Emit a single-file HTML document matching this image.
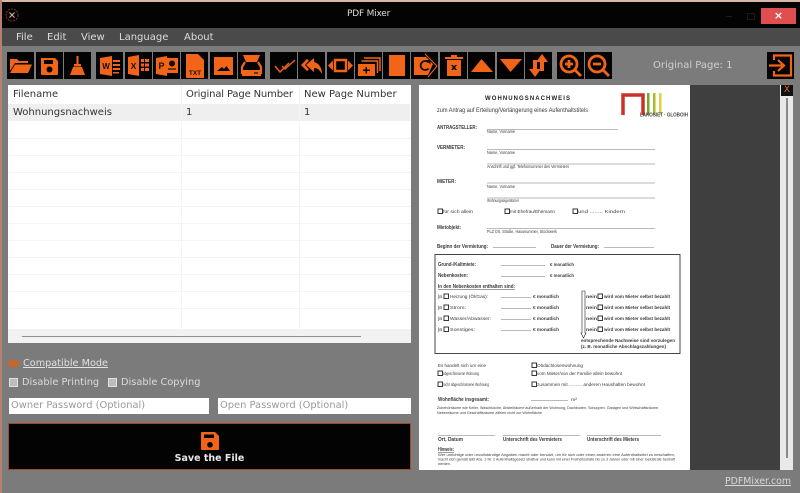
<!DOCTYPE html>
<html><head><meta charset="utf-8"><style>
html,body{margin:0;padding:0}
body{width:800px;height:493px;overflow:hidden;position:relative;background:#7b7b7b;font-family:"DejaVu Sans",sans-serif;filter:blur(.35px)}
.a{position:absolute;white-space:nowrap}
.b{position:absolute;top:52px;width:27px;height:27px;background:#030303}
.b svg{display:block;width:27px;height:27px}
.t{font-size:10px;color:#333}
.l{position:absolute;background:#f4f4f4}
.m{top:32px;font-size:10px;color:#ddd}
</style></head><body>
<div class="a" style="left:0;top:0;width:800px;height:2px;background:#d8b6a6"></div>
<div class="a" style="left:0;top:0;width:2px;height:493px;background:#b5806c"></div>
<div class="a" style="left:2px;top:2px;width:798px;height:26px;background:#030303"></div>
<svg class="a" style="left:5px;top:7px" width="16" height="16" viewBox="0 0 16 16"><circle cx="7" cy="8" r="6" fill="none" stroke="#7a3a20" stroke-width="1" stroke-dasharray="2 1"/><path d="M4.500 5.500L7 8L4.500 10.500M9.500 5.500L7 8L9.500 10.500" fill="none" stroke="#d9a58f" stroke-width="1.200"/></svg>
<div class="a" style="left:347px;top:9px;font-size:9px;letter-spacing:-.2px;color:#ddd">PDF Mixer</div>
<div class="a" style="left:726px;top:16px;width:6px;height:1px;background:#1a1a1a"></div>
<div class="a" style="left:747px;top:13px;width:6px;height:5px;border:1px solid #1a1a1a"></div>
<div class="a" style="left:761px;top:8px;width:35px;height:16px;background:#e04f4f;color:#fff;font-size:11px;line-height:16px;text-align:center;font-weight:bold">×</div>
<div class="a" style="left:2px;top:28px;width:798px;height:18px;background:#4a4a4a"></div>
<div class="a m" style="left:16px">File</div>
<div class="a m" style="left:47px">Edit</div>
<div class="a m" style="left:81px">View</div>
<div class="a m" style="left:119px">Language</div>
<div class="a m" style="left:184px">About</div>

<div class="b" style="left:7px"><svg viewBox="0 0 27 27" fill="#f26418"><path d="M3 19V7h7l2 2h9v2H8z"/><path d="M8 12.500h17L21 21H3z"/></svg></div>
<div class="b" style="left:36px"><svg viewBox="0 0 27 27" fill="#f26418"><path fill-rule="evenodd" d="M5 6h14l3 3v13a1 1 0 0 1-1 1H6a1 1 0 0 1-1-1zM8 8v4h9V8zM13.500 14.500a3 3 0 1 0 .01 0z"/></svg></div>
<div class="b" style="left:64px"><svg viewBox="0 0 27 27" fill="#f26418"><path d="M12.500 4h2v8h-2zM10 12h7v2.500h-7zM9 15h9l3 8H6z"/></svg></div>
<div class="b" style="left:96px"><svg viewBox="0 0 27 27" fill="#f26418"><path d="M17 8h7v2h-7zM17 12h7v2h-7zM17 16h7v2h-7zM17 20h6v1.500h-6z"/><path d="M4 6l12-2v20L4 22z"/><text x="10" y="17" font-size="8" font-weight="bold" fill="#111" text-anchor="middle" font-family="Liberation Sans">W</text></svg></div>
<div class="b" style="left:125px"><svg viewBox="0 0 27 27" fill="#f26418"><path d="M16 7h3v3h-3zM20 7h4v3h-4zM16 11.500h3v3h-3zM20 11.500h4v3h-4zM16 16h3v3h-3zM20 16h4v3h-4z"/><path d="M3 5l11-2v21L3 22z"/><text x="8.500" y="17" font-size="8.500" font-weight="bold" fill="#111" text-anchor="middle" font-family="Liberation Sans">X</text></svg></div>
<div class="b" style="left:153px"><svg viewBox="0 0 27 27" fill="#f26418"><path d="M12 6h13v15H12z"/><circle cx="19" cy="11.500" r="3" fill="#111"/><path d="M15 17h8" stroke="#111" stroke-width="1.200"/><path d="M3 6l11-2v20L3 22z"/><text x="8.500" y="17" font-size="9" font-weight="bold" fill="#111" text-anchor="middle" font-family="Liberation Sans">P</text></svg></div>
<div class="b" style="left:181px"><svg viewBox="0 0 27 27" fill="#f26418"><path d="M5 2h12l6 6v18H5z"/><text x="14" y="23" font-size="6.500" font-weight="bold" fill="#111" text-anchor="middle" font-family="Liberation Sans">TXT</text></svg></div>
<div class="b" style="left:210px"><svg viewBox="0 0 27 27" fill="#f26418"><path fill-rule="evenodd" d="M4 5h19v18H4zM7 19h13l-3.500-5-2.500 3-2-2z"/></svg></div>
<div class="b" style="left:238px"><svg viewBox="0 0 27 27" fill="none" stroke="#f26418" stroke-width="2.200"><path d="M5 3h17l-3 7H8z" fill="#f26418" stroke="none"/><path d="M7 10l-3 5v7M20 10l3 5v7"/><path d="M4 18h19v6H4z" fill="#f26418" stroke="none"/><path d="M16 21h4" stroke="#111" stroke-width="1.200"/></svg></div>

<div class="b" style="left:270px"><svg viewBox="0 0 27 27" fill="none" stroke="#e85f1c" stroke-width="1.500"><path d="M5 14l5 6 9-9M12 14l3 3 10-9"/></svg></div>
<div class="b" style="left:298px"><svg viewBox="0 0 27 27" fill="#f26418"><path d="M9 7L3 13l6 6 2-1.500-4-4.500 4-4.500z"/><path d="M16 6l-8 7 8 7v-4c3 0 5 1 8 6 0-6-3-11-8-12z"/></svg></div>
<div class="b" style="left:327px"><svg viewBox="0 0 27 27" fill="#f26418"><path d="M1 13.500l5-5v10zM26 13.500l-5-5v10z"/><path d="M8 8h11v11H8z" fill="none" stroke="#f26418" stroke-width="2.400"/></svg></div>
<div class="b" style="left:355px"><svg viewBox="0 0 27 27" fill="#f26418"><path d="M9 6h16v13" fill="none" stroke="#f26418" stroke-width="1.500"/><path d="M6.500 9h16v12" fill="none" stroke="#f26418" stroke-width="1.500"/><path fill-rule="evenodd" d="M3 12h17v12H3zM10.500 15v2.500H8v1.500h2.500v2.500H12V19h3v-1.500h-3V15z"/></svg></div>
<div class="b" style="left:383px"><svg viewBox="0 0 27 27" fill="#f26418"><path d="M6 3h16v21H6z"/></svg></div>
<div class="b" style="left:411px"><svg viewBox="0 0 27 27" fill="#f26418"><path d="M14 2l12 12-9 11" fill="none" stroke="#f26418" stroke-width="1"/><path d="M3 5h12l7 7-5 11H3z"/><path d="M17.500 10.500a4.500 4.500 0 1 0 0 6" fill="none" stroke="#111" stroke-width="1.800"/><path d="M15 8h4.500v4.500z" fill="#111"/></svg></div>
<div class="b" style="left:440px"><svg viewBox="0 0 27 27" fill="#f26418"><path d="M5 5h6V3h6v2h6v2H5z"/><path fill-rule="evenodd" d="M7 8h14v16H7zM11 13l2 2.500-2 2.500h2l1-1.500 1 1.500h2l-2-2.500 2-2.500h-2l-1 1.500-1-1.500z"/></svg></div>
<div class="b" style="left:468px"><svg viewBox="0 0 27 27" fill="#f26418"><path d="M13.500 7L25 20H3z"/></svg></div>
<div class="b" style="left:497px"><svg viewBox="0 0 27 27" fill="#f26418"><path d="M13.500 20L25 7H3z"/></svg></div>
<div class="b" style="left:525px"><svg viewBox="0 0 27 27" fill="#f26418"><path d="M17 2l6 8h-4v9h-4v-9h-4z"/><path d="M10 25l-6-8h4V8h4v9h4z"/></svg></div>
<div class="b" style="left:557px"><svg viewBox="0 0 27 27" fill="none" stroke="#f26418" stroke-width="2.800"><circle cx="12" cy="12" r="8"/><path d="M18 18l6 6M8 12h8M12 8v8"/></svg></div>
<div class="b" style="left:585px"><svg viewBox="0 0 27 27" fill="none" stroke="#f26418" stroke-width="2.800"><circle cx="12" cy="12" r="8"/><path d="M18 18l6 6M8 12h8"/></svg></div>
<div class="a" style="left:653px;top:60px;font-size:10px;color:#cfcfcf">Original Page: 1</div>
<div class="b" style="left:767px"><svg viewBox="0 0 27 27" fill="none" stroke="#f26418" stroke-width="2.200"><path d="M7 8V3.500h17v20H7V19"/><path d="M2 13.500h13M11 8l6 5.500-6 5.500"/></svg></div>

<div class="a" style="left:8px;top:85px;width:403px;height:258px;background:#fff"></div>
<div class="a" style="left:8px;top:104px;width:402px;height:17px;background:#efefef"></div>
<div class="a" style="left:8px;top:329px;width:403px;height:14px;background:#f2f2f2"></div>
<div class="l" style="left:181px;top:85px;width:1px;height:244px"></div>
<div class="l" style="left:299px;top:85px;width:1px;height:244px"></div>
<div class="l" style="left:8px;top:138px;width:403px;height:1px"></div>
<div class="l" style="left:8px;top:155px;width:403px;height:1px"></div>
<div class="l" style="left:8px;top:172px;width:403px;height:1px"></div>
<div class="l" style="left:8px;top:189px;width:403px;height:1px"></div>
<div class="l" style="left:8px;top:206px;width:403px;height:1px"></div>
<div class="l" style="left:8px;top:223px;width:403px;height:1px"></div>
<div class="l" style="left:8px;top:240px;width:403px;height:1px"></div>
<div class="l" style="left:8px;top:257px;width:403px;height:1px"></div>
<div class="l" style="left:8px;top:274px;width:403px;height:1px"></div>
<div class="l" style="left:8px;top:291px;width:403px;height:1px"></div>
<div class="l" style="left:8px;top:308px;width:403px;height:1px"></div>
<div class="a" style="left:22px;top:336px;width:339px;height:1px;background:#8f8f8f"></div>
<div class="a t" style="left:13px;top:89px">Filename</div>
<div class="a t" style="left:186px;top:89px;letter-spacing:-.15px">Original Page Number</div>
<div class="a t" style="left:304px;top:89px">New Page Number</div>
<div class="a t" style="left:13px;top:107px">Wohnungsnachweis</div>
<div class="a t" style="left:186px;top:107px">1</div>
<div class="a t" style="left:304px;top:107px">1</div>

<div class="a" style="left:8px;top:360px;width:11px;height:7px;background:#c9652f;border-radius:3px"></div>
<div class="a" style="left:23px;top:358px;font-size:9.700px;color:#e2e2e2;text-decoration:underline">Compatible Mode</div>
<div class="a" style="left:9px;top:378px;width:7px;height:7px;background:#bcbcbc;border:1px solid #e0e0e0"></div>
<div class="a" style="left:22px;top:377px;font-size:9.800px;color:#dcdcdc">Disable Printing</div>
<div class="a" style="left:108px;top:378px;width:7px;height:7px;background:#bcbcbc;border:1px solid #e0e0e0"></div>
<div class="a" style="left:121px;top:377px;font-size:9.800px;color:#dcdcdc">Disable Copying</div>
<div class="a" style="left:9px;top:398px;width:200px;height:16px;background:#fff;color:#9a9a9a;font-size:9.900px;line-height:15px;text-indent:2px">Owner Password (Optional)</div>
<div class="a" style="left:218px;top:398px;width:193px;height:16px;background:#fff;color:#9a9a9a;font-size:9.900px;line-height:15px;text-indent:2px">Open Password (Optional)</div>
<div class="a" style="left:8px;top:423px;width:403px;height:47px;background:#030303;box-sizing:border-box;border:1px solid #a04a28"></div>
<svg class="a" style="left:199px;top:431px" width="22" height="20" viewBox="0 0 22 20"><path fill="#f26418" fill-rule="evenodd" d="M2 2a1 1 0 0 1 1-1h13l4 4v13a1 1 0 0 1-1 1H3a1 1 0 0 1-1-1zM5 3.500v3.500h10V3.500zM11 11a2.800 2.800 0 1 0 .01 0z"/></svg>
<div class="a" style="left:8px;top:453px;width:403px;text-align:center;font-size:9.500px;font-weight:bold;color:#e8e8e8">Save the File</div>

<div class="a" style="left:690px;top:85px;width:90px;height:385px;background:#3f3f3f"></div>
<div class="a" style="left:780px;top:85px;width:13px;height:385px;background:#e9e9e9"></div>
<div class="a" style="left:781px;top:85px;width:12px;height:11px;background:#111;color:#e06a30;font-size:9px;line-height:11px;text-align:center">X</div>
<div class="a" style="left:786px;top:98px;width:2px;height:360px;background:#8a8a8a"></div>
<div class="a" style="left:725px;top:476px;font-size:9.400px;color:#d8d8d8;text-decoration:underline">PDFMixer.com</div>

<svg class="a" style="left:419px;top:85px;background:#fff;filter:blur(.3px)" width="271" height="385" viewBox="419 85 271 385" font-family="Liberation Sans,sans-serif" fill="#3a3a3a">
<g font-size="5" font-weight="bold">
<text x="485" y="100" textLength="86" font-size="6" letter-spacing="1" fill="#222">WOHNUNGSNACHWEIS</text>
<text x="437" y="129" textLength="40" lengthAdjust="spacingAndGlyphs">ANTRAGSTELLER:</text>
<text x="437" y="149" textLength="28" lengthAdjust="spacingAndGlyphs">VERMIETER:</text>
<text x="437" y="183" textLength="19" lengthAdjust="spacingAndGlyphs">MIETER:</text>
<text x="437" y="229" textLength="24" lengthAdjust="spacingAndGlyphs">Mietobjekt:</text>
<text x="437" y="248" textLength="51" lengthAdjust="spacingAndGlyphs">Beginn der Vermietung:</text>
<text x="551" y="248" textLength="48" lengthAdjust="spacingAndGlyphs">Dauer der Vermietung:</text>
<text x="438" y="266" textLength="38" lengthAdjust="spacingAndGlyphs">Grund-/Kaltmiete:</text>
<text x="438" y="277" textLength="30" lengthAdjust="spacingAndGlyphs">Nebenkosten:</text>
<text x="438" y="288" textLength="77" lengthAdjust="spacingAndGlyphs" text-decoration="underline">In den Nebenkosten enthalten sind:</text>
<text x="438" y="401" textLength="51" lengthAdjust="spacingAndGlyphs">Wohnfläche insgesamt:</text>
<text x="438" y="441" textLength="25" lengthAdjust="spacingAndGlyphs">Ort, Datum</text>
<text x="503" y="441" textLength="59" lengthAdjust="spacingAndGlyphs">Unterschrift des Vermieters</text>
<text x="587" y="441" textLength="52" lengthAdjust="spacingAndGlyphs">Unterschrift des Mieters</text>
<text x="438" y="451" textLength="16" lengthAdjust="spacingAndGlyphs" text-decoration="underline">Hinweis:</text>
</g>
<g font-size="4.500">
<text x="437" y="112" textLength="151" lengthAdjust="spacingAndGlyphs" font-size="6">zum Antrag auf Erteilung/Verlängerung eines Aufenthaltstitels</text>
<text x="487" y="133" textLength="28" lengthAdjust="spacingAndGlyphs">Name, Vorname</text>
<text x="487" y="154" textLength="28" lengthAdjust="spacingAndGlyphs">Name, Vorname</text>
<text x="487" y="168" textLength="82" lengthAdjust="spacingAndGlyphs">Anschrift und ggf. Telefonnummer des Vermieters</text>
<text x="487" y="188" textLength="28" lengthAdjust="spacingAndGlyphs">Name, Vorname</text>
<text x="487" y="202" textLength="32" lengthAdjust="spacingAndGlyphs">Wohnungseigentümer</text>
<text x="443" y="213" textLength="30" lengthAdjust="spacingAndGlyphs">für sich allein</text>
<text x="510" y="213" textLength="45" lengthAdjust="spacingAndGlyphs">mit Ehefrau/Ehemann</text>
<text x="578" y="213" textLength="47" lengthAdjust="spacingAndGlyphs">und ........ Kindern</text>
<text x="487" y="233" textLength="70" lengthAdjust="spacingAndGlyphs">PLZ Ort, Straße, Hausnummer, Stockwerk</text>
<text x="550" y="266" textLength="24" lengthAdjust="spacingAndGlyphs" font-weight="bold">€ monatlich</text>
<text x="550" y="277" textLength="24" lengthAdjust="spacingAndGlyphs" font-weight="bold">€ monatlich</text>
<text x="438" y="298" font-size="5">ja</text><text x="450" y="298" textLength="38" lengthAdjust="spacingAndGlyphs">Heizung (Öl/Gas):</text>
<text x="438" y="309" font-size="5">ja</text><text x="450" y="309" textLength="16" lengthAdjust="spacingAndGlyphs">Strom:</text>
<text x="438" y="320" font-size="5">ja</text><text x="450" y="320" textLength="41" lengthAdjust="spacingAndGlyphs">Wasser/Abwasser:</text>
<text x="438" y="331" font-size="5">ja</text><text x="450" y="331" textLength="25" lengthAdjust="spacingAndGlyphs">Sonstiges:</text>
<text x="533" y="298" textLength="26" lengthAdjust="spacingAndGlyphs" font-weight="bold">€ monatlich</text>
<text x="533" y="309" textLength="26" lengthAdjust="spacingAndGlyphs" font-weight="bold">€ monatlich</text>
<text x="533" y="320" textLength="26" lengthAdjust="spacingAndGlyphs" font-weight="bold">€ monatlich</text>
<text x="533" y="331" textLength="26" lengthAdjust="spacingAndGlyphs" font-weight="bold">€ monatlich</text>
<text x="586" y="298" textLength="11" lengthAdjust="spacingAndGlyphs" font-weight="bold">nein</text><text x="604" y="298" textLength="66" lengthAdjust="spacingAndGlyphs" font-weight="bold">wird vom Mieter selbst bezahlt</text>
<text x="586" y="309" textLength="11" lengthAdjust="spacingAndGlyphs" font-weight="bold">nein</text><text x="604" y="309" textLength="66" lengthAdjust="spacingAndGlyphs" font-weight="bold">wird vom Mieter selbst bezahlt</text>
<text x="586" y="320" textLength="11" lengthAdjust="spacingAndGlyphs" font-weight="bold">nein</text><text x="604" y="320" textLength="66" lengthAdjust="spacingAndGlyphs" font-weight="bold">wird vom Mieter selbst bezahlt</text>
<text x="586" y="331" textLength="11" lengthAdjust="spacingAndGlyphs" font-weight="bold">nein</text><text x="604" y="331" textLength="66" lengthAdjust="spacingAndGlyphs" font-weight="bold">wird vom Mieter selbst bezahlt</text>
<text x="581" y="342" textLength="94" lengthAdjust="spacingAndGlyphs" font-weight="bold">entsprechende Nachweise sind vorzulegen</text>
<text x="581" y="348" textLength="85" lengthAdjust="spacingAndGlyphs" font-weight="bold">(z. B. monatliche Abschlagszahlungen)</text>
<text x="438" y="367" textLength="48" lengthAdjust="spacingAndGlyphs">Es handelt sich um eine</text>
<text x="537" y="367" textLength="46" lengthAdjust="spacingAndGlyphs">Obdachlosenwohnung</text>
<text x="443" y="375" textLength="36" lengthAdjust="spacingAndGlyphs">abgeschlossene Wohnung</text>
<text x="537" y="375" textLength="85" lengthAdjust="spacingAndGlyphs">vom Mieter/von der Familie allein bewohnt</text>
<text x="443" y="386" textLength="46" lengthAdjust="spacingAndGlyphs">nicht abgeschlossene Wohnung</text>
<text x="537" y="386" textLength="108" lengthAdjust="spacingAndGlyphs">zusammen mit .......... anderen Haushalten bewohnt</text>
<text x="571" y="401" textLength="6" lengthAdjust="spacingAndGlyphs">m²</text>
<text x="437" y="409" textLength="222" lengthAdjust="spacingAndGlyphs" font-size="3.800">Zubehörräume wie Keller, Waschküche, Abstellräume außerhalb der Wohnung, Dachboden, Schuppen, Garagen und Wirtschaftsräume,</text>
<text x="437" y="414" textLength="105" lengthAdjust="spacingAndGlyphs" font-size="3.800">Nebenräume und Geschäftsräume zählen nicht zur Wohnfläche</text>
<text x="438" y="456" textLength="237" lengthAdjust="spacingAndGlyphs" font-size="3.800">Wer unrichtige oder unvollständige Angaben macht oder benutzt, um für sich oder einen anderen eine Aufenthaltstitel zu beschaffen,</text>
<text x="438" y="460.500" textLength="237" lengthAdjust="spacingAndGlyphs" font-size="3.800">macht sich gemäß §95 Abs. 2 Nr. 2 Aufenthaltsgesetz strafbar und kann mit einer Freiheitsstrafe bis zu 3 Jahren oder mit einer Geldstrafe bestraft</text>
<text x="438" y="465" textLength="13" lengthAdjust="spacingAndGlyphs" font-size="3.800">werden.</text>
</g>
<g stroke="#777" stroke-width=".6" fill="none">
<path d="M487 129.500H618M487 149.500H655M487 164H655M487 183H655M487 198H655M487 228.500H655M493 247.500H536M604 247.500H654M501 265.500H545M501 276.500H545M501 297.500H531M501 308.500H531M501 319.500H531M501 330.500H531M531 400.500H568M438 435.500H495M503 435.500H580M587 435.500H661"/>
</g>
<rect x="435" y="254.500" width="245" height="99" fill="none" stroke="#333" stroke-width=".9"/>
<g fill="none" stroke="#222" stroke-width=".9">
<rect x="438" y="209" width="4.500" height="4.500"/><rect x="505" y="209" width="4.500" height="4.500"/><rect x="573" y="209" width="4.500" height="4.500"/>
<rect x="444" y="294" width="4.500" height="4.500"/><rect x="444" y="305" width="4.500" height="4.500"/><rect x="444" y="316" width="4.500" height="4.500"/><rect x="444" y="327" width="4.500" height="4.500"/>
<rect x="598" y="294" width="4.500" height="4.500"/><rect x="598" y="305" width="4.500" height="4.500"/><rect x="598" y="316" width="4.500" height="4.500"/><rect x="598" y="327" width="4.500" height="4.500"/>
<rect x="532" y="363" width="4.500" height="4.500"/><rect x="532" y="371" width="4.500" height="4.500"/><rect x="532" y="382" width="4.500" height="4.500"/><rect x="438" y="371" width="4.500" height="4.500"/><rect x="438" y="382" width="4.500" height="4.500"/>
<path d="M582 291v42h-1l2.500 5 2.500-5h-1v-42z" stroke-width=".6"/>
</g>
<path d="M623 115V95h20v20" fill="none" stroke="#c9302a" stroke-width="3.500"/>
<path d="M647 93h2.500v22H647z" fill="#72a82e"/><path d="M653 93h2.500v22H653z" fill="#a9bd2c"/><path d="M659 93h2.500v22H659z" fill="#dcd338"/>
<text x="640" y="116.500" textLength="48" lengthAdjust="spacingAndGlyphs" font-size="5" font-weight="bold" fill="#444">LAKOSIET · GLOBOIH</text>
</svg>
</body></html>
